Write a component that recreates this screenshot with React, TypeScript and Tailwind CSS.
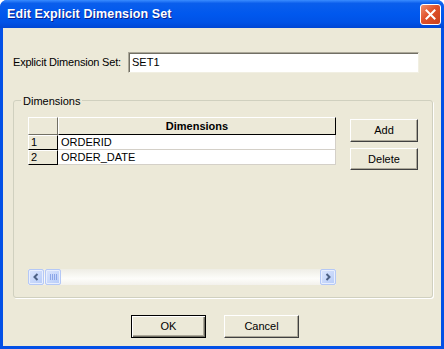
const rows = ['ORDERID', 'ORDER_DATE'];

const btn =
  'flex items-center justify-center bg-[#ECE9D8] border border-t-white border-l-white border-b-[#404040] border-r-[#404040] shadow-[inset_-1px_-1px_0_#ACA899] text-[11px] text-black';

const ScrollBtn = ({ dir }: { dir: 'left' | 'right' }) => (
  <div className="w-[16px] h-[16px] rounded-[2px] border border-[#B4C8F6] bg-[linear-gradient(135deg,#DCE6FD,#B6CBF8)] flex items-center justify-center shadow-[inset_0_0_0_1px_#E9EFFD]">
    <svg width="8" height="8" viewBox="0 0 8 8">
      {dir === 'left' ? (
        <path d="M5.5 1 L2.5 4 L5.5 7" stroke="#4D6185" strokeWidth="2" fill="none" />
      ) : (
        <path d="M2.5 1 L5.5 4 L2.5 7" stroke="#4D6185" strokeWidth="2" fill="none" />
      )}
    </svg>
  </div>
);

export default function App() {
  return (
    <div className="w-[444px] h-[349px] flex flex-col bg-[#0350E6] rounded-t-[7px] overflow-hidden font-['Liberation_Sans',Arial,sans-serif]">
      {/* title bar */}
      <div className="h-[28px] shrink-0 flex items-center pl-[7px] pr-[3px] bg-[linear-gradient(180deg,#3A8CFF_0%,#0A5EEC_12%,#0058EE_50%,#0052E6_80%,#0046D4_100%)]">
        <span className="text-white font-bold text-[12.5px] tracking-[0.1px] [text-shadow:1px_1px_0_#0A1E8C]">
          Edit Explicit Dimension Set
        </span>
        <div className="ml-auto w-[21px] h-[21px] rounded-[3px] border border-white bg-[linear-gradient(135deg,#F0906E,#E0512A_45%,#C8401D)] flex items-center justify-center">
          <svg width="11" height="11" viewBox="0 0 11 11">
            <path d="M1.5 1.5 L9.5 9.5 M9.5 1.5 L1.5 9.5" stroke="white" strokeWidth="2" strokeLinecap="square" />
          </svg>
        </div>
      </div>

      {/* body */}
      <div className="flex-1 mx-[3px] mb-[3px] bg-[#ECE9D8] flex flex-col text-[11px] text-black">
        <div className="mt-[24px] pl-[10px] flex items-center">
          <span className="w-[115px] tracking-[-0.2px]">Explicit Dimension Set:</span>
          <div className="w-[291px] h-[21px] bg-white border border-t-[#ACA899] border-l-[#ACA899] border-b-[#F1EFE2] border-r-[#F1EFE2] shadow-[inset_1px_1px_0_#716F64] flex items-center pl-[3px]">
            SET1
          </div>
        </div>

        {/* group box */}
        <div className="relative ml-[10px] mt-[27px] w-[420px] h-[198px] border border-[#D0D0BF] rounded-[3px] shadow-[1px_1px_0_white] flex pt-[16px] pl-[14px]">
          <span className="absolute -top-[8px] left-[7px] px-[2px] bg-[#ECE9D8]">Dimensions</span>

          {/* grid */}
          <div className="w-[308px] h-[168px] flex flex-col">
            <div className="flex h-[18px]">
              <div className="w-[30px] bg-[#ECE9D8] border border-t-white border-l-white border-b-[#716F64] border-r-[#716F64]" />
              <div className="flex-1 bg-[#ECE9D8] border border-t-white border-l-white border-b-black border-r-black font-bold flex items-center justify-center">
                Dimensions
              </div>
            </div>
            {rows.map((r, i) => (
              <div key={r} className="flex h-[15px]">
                <div className="w-[30px] bg-[#ECE9D8] border border-t-white border-l-white border-b-black border-r-black flex items-center pl-[2px]">
                  {i + 1}
                </div>
                <div className="flex-1 bg-white border-b border-r border-[#D4D0C8] flex items-center pl-[3px]">
                  {r}
                </div>
              </div>
            ))}
            <div className="flex-1" />
            <div className="h-[16px] flex bg-[linear-gradient(180deg,#EEEDE5,#FDFDFA_60%,#F3F1EC)]">
              <ScrollBtn dir="left" />
              <div className="ml-[1px] w-[16px] h-[16px] rounded-[2px] border border-[#B4C8F6] bg-[linear-gradient(135deg,#DCE6FD,#B6CBF8)] shadow-[inset_0_0_0_1px_#E9EFFD] flex items-center justify-center gap-[1px]">
                {[0, 1, 2, 3].map((k) => (
                  <div key={k} className="w-[1px] h-[6px] bg-[#8CA6E8]" />
                ))}
              </div>
              <div className="flex-1" />
              <ScrollBtn dir="right" />
            </div>
          </div>

          {/* side buttons */}
          <div className="ml-[14px] mt-[2px] flex flex-col gap-[6px]">
            <div className={`${btn} w-[68px] h-[23px]`}>Add</div>
            <div className={`${btn} w-[68px] h-[22px]`}>Delete</div>
          </div>
        </div>

        {/* bottom buttons */}
        <div className="mt-[17px] ml-[128px] flex gap-[18px]">
          <div className="w-[75px] h-[23px] flex items-center justify-center bg-[#ECE9D8] border border-black shadow-[inset_1px_1px_0_white,inset_-1px_-1px_0_#716F64,inset_-2px_-2px_0_#ACA899]">
            OK
          </div>
          <div className={`${btn} w-[75px] h-[23px]`}>Cancel</div>
        </div>
      </div>
    </div>
  );
}
